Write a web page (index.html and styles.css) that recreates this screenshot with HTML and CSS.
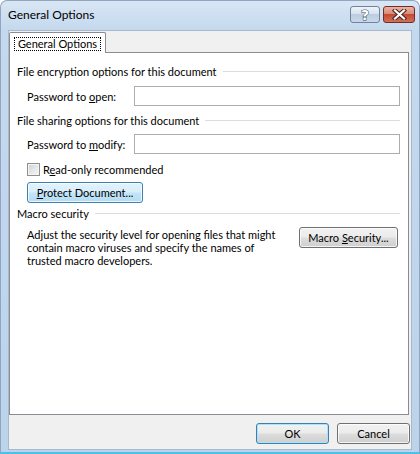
FILE: index.html
```html
<!DOCTYPE html>
<html>
<head>
<meta charset="utf-8">
<title>General Options</title>
<link rel="stylesheet" href="styles.css">
</head>
<body>
<div class="window">
  <div class="titlebar">
    <span class="title">General Options</span>
    <div class="caption-buttons">
      <span class="cap-btn help">?</span>
      <span class="cap-btn close">
        <svg width="15" height="11" viewBox="0 0 15 11">
          <path d="M3 1.5 L12 9.5 M12 1.5 L3 9.5" stroke="#4a2420" stroke-width="4.2" stroke-linecap="square" fill="none"/>
          <path d="M3 1.5 L12 9.5 M12 1.5 L3 9.5" stroke="#ffffff" stroke-width="2.2" stroke-linecap="square" fill="none"/>
        </svg>
      </span>
    </div>
  </div>
  <div class="client">
    <div class="tabs">
      <div class="tab"><span class="focus">General Options</span></div>
    </div>
    <div class="panel">
      <div class="group-head"><span>File encryption options for this document</span><i class="rule"></i></div>
      <div class="field">
        <span class="label">Password to <u>o</u>pen:</span>
        <span class="input"></span>
      </div>
      <div class="group-head gap2"><span>File sharing options for this document</span><i class="rule"></i></div>
      <div class="field field2">
        <span class="label">Password to <u>m</u>odify:</span>
        <span class="input"></span>
      </div>
      <div class="check-row">
        <span class="checkbox"></span>
        <span>R<u>e</u>ad-only recommended</span>
      </div>
      <button class="btn hot protect"><u>P</u>rotect Document...</button>
      <div class="group-head gap3"><span>Macro security</span><i class="rule"></i></div>
      <div class="macro-row">
        <p class="macro-text">Adjust the security level for opening files that might<br>contain macro viruses and specify the names of<br>trusted macro developers.</p>
        <button class="btn macro">Macro <u>S</u>ecurity...</button>
      </div>
    </div>
    <div class="footer">
      <button class="btn default">OK</button>
      <button class="btn">Cancel</button>
    </div>
  </div>
</div>
</body>
</html>
```

FILE: styles.css
```css
html, body {
  margin: 0;
  padding: 0;
  background: #ffffff;
}

.window {
  width: 420px;
  height: 454px;
  box-sizing: border-box;
  display: flex;
  flex-direction: column;
  background: linear-gradient(to bottom, #d9e6f4 0px, #c5d9ee 28px, #bcd3ea 100%);
  border: 1px solid #8ea6c0;
  border-bottom: 2px solid #49c1e8;
  border-radius: 7px 7px 0 0;
  font-family: Lato, "Open Sans", sans-serif;
  font-size: 11px;
  color: #000;
}

/* ---- caption ---- */
.titlebar {
  height: 29px;
  display: flex;
  align-items: flex-start;
}

.title {
  font-size: 12px;
  line-height: 16px;
  margin: 6px 0 0 7px;
  color: #000;
}

.caption-buttons {
  margin-left: auto;
  margin-top: 5px;
  margin-right: 4px;
  display: flex;
  gap: 3px;
}

.cap-btn {
  height: 17px;
  box-sizing: border-box;
  border-radius: 3px;
  display: flex;
  align-items: center;
  justify-content: center;
}

.help {
  width: 30px;
  border: 1px solid #71839a;
  background: linear-gradient(to bottom, #eef3f9 0%, #d6e2ef 45%, #bccde1 50%, #c9d8e9 100%);
  color: #fff;
  font-family: "DejaVu Sans", sans-serif;
  font-weight: bold;
  font-size: 14px;
  line-height: 14px;
  -webkit-text-stroke: 1px #39465a;
  paint-order: stroke fill;
}

.close {
  width: 32px;
  border: 1px solid #6f2f26;
  background: linear-gradient(to bottom, #eab3a6 0%, #da8b78 45%, #c54a33 50%, #d0705c 100%);
}

/* ---- dialog body ---- */
.client {
  flex: 1;
  margin: 0 7px 2px 7px;
  background: #f0f0f0;
  border: 1px solid #a7b9cd;
  box-sizing: border-box;
  display: flex;
  flex-direction: column;
  padding: 1px 2px 0 0;
}

.tabs {
  display: flex;
  height: 20px;
  position: relative;
  z-index: 1;
}

.tab {
  width: 97px;
  height: 21px;
  box-sizing: border-box;
  background: #fff;
  border: 1px solid #898c95;
  border-bottom: none;
  border-radius: 2px 2px 0 0;
  padding: 4px 0 0 4px;
}

.focus {
  display: block;
  width: 87px;
  height: 14px;
  box-sizing: border-box;
  border: 1px dotted #000;
  line-height: 12px;
  text-align: center;
  white-space: nowrap;
}

.panel {
  height: 363px;
  box-sizing: border-box;
  background: #fff;
  border: 1px solid #898c95;
  padding: 11px 8px 0 7px;
  display: flex;
  flex-direction: column;
}

.group-head {
  display: flex;
  align-items: center;
  height: 15px;
  line-height: 15px;
  white-space: nowrap;
}

.group-head .rule {
  flex: 1;
  height: 1px;
  background: #d5dfe5;
  margin-left: 6px;
}

.gap2 { margin-top: 7px; }
.gap3 { margin-top: 3px; }

.field {
  display: flex;
  align-items: center;
  height: 20px;
  margin-top: 7px;
  padding-left: 10px;
}

.field2 { margin-top: 6px; }

.label {
  width: 107px;
  flex: none;
  white-space: nowrap;
}

.input {
  flex: 1;
  height: 20px;
  box-sizing: border-box;
  background: #fff;
  border: 1px solid #abadb3;
}

.check-row {
  display: flex;
  align-items: center;
  height: 13px;
  margin-top: 9px;
  padding-left: 10px;
  white-space: nowrap;
}

.checkbox {
  width: 13px;
  height: 13px;
  box-sizing: border-box;
  border: 1px solid #8e8f8f;
  background: linear-gradient(135deg, #cbcfd5 0%, #e6e8eb 55%, #f4f4f4 100%);
  box-shadow: inset 0 0 0 1px #f4f4f4;
  margin-right: 3px;
}

/* ---- push buttons ---- */
.btn {
  font-family: inherit;
  font-size: 11px;
  color: #000;
  height: 21px;
  box-sizing: border-box;
  border: 1px solid #707070;
  border-radius: 3px;
  padding: 0;
  background: linear-gradient(to bottom, #f2f2f2 0%, #ebebeb 48%, #dddddd 52%, #cfcfcf 100%);
  box-shadow: inset 0 0 0 1px rgba(255, 255, 255, 0.75);
  white-space: nowrap;
}

.btn.hot {
  border-color: #3c7fb1;
  background: linear-gradient(to bottom, #e3f3fc 0%, #d6eefb 48%, #c3e4f7 52%, #b4dcf3 100%);
}

.btn.default {
  border-color: #3c7fb1;
  box-shadow: inset 0 0 0 1px #a9e5f8;
}

.protect {
  align-self: flex-start;
  width: 116px;
  margin-left: 10px;
  margin-top: 6px;
}

.macro-row {
  display: flex;
  align-items: flex-start;
  margin-top: 6px;
  padding-left: 10px;
}

.macro-text {
  flex: 1;
  margin: 1px 0 0 0;
  line-height: 13px;
  white-space: nowrap;
}

.macro {
  width: 99px;
  margin-right: 2px;
}

.footer {
  display: flex;
  justify-content: flex-end;
  gap: 8px;
  margin-top: 8px;
  margin-right: -1px;
}

.footer .btn {
  width: 73px;
}
```
